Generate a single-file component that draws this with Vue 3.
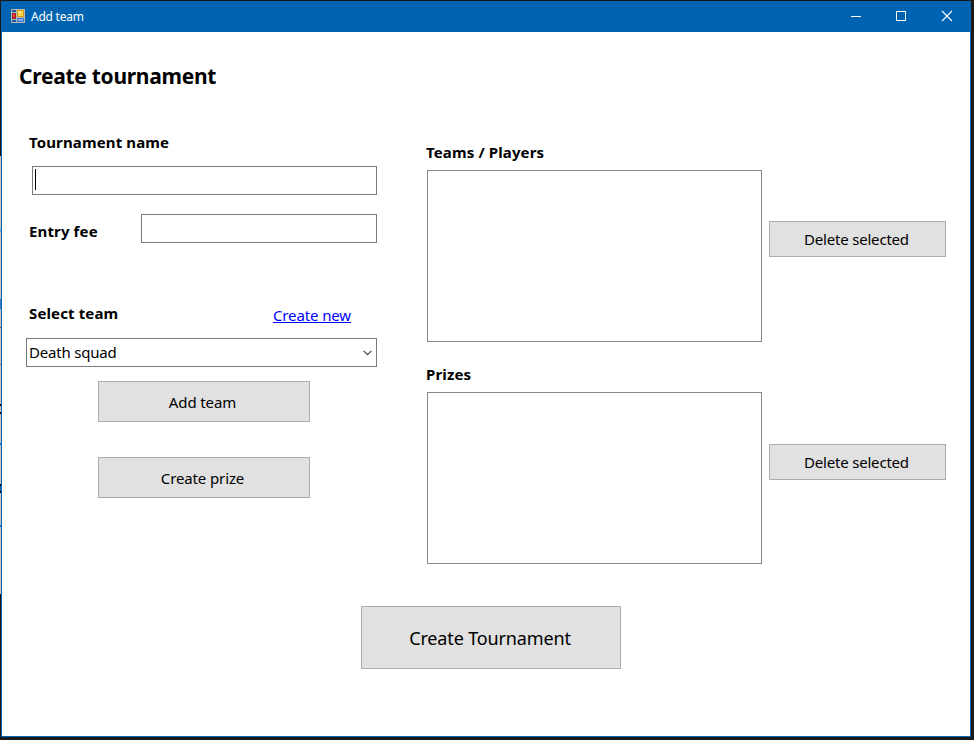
<script setup>
import { ref } from 'vue'

const tournamentName = ref('')
const entryFee = ref('')
const lists = ['Teams / Players', 'Prizes']
</script>

<template>
  <div class="desktop">
    <div class="behind"></div>
    <div class="window">
      <header class="titlebar">
        <svg class="app-icon" width="14" height="14" viewBox="0 0 14 14" shape-rendering="crispEdges">
          <rect width="14" height="14" fill="#b9b9b4" />
          <rect x="1" y="1" width="4" height="2" fill="#1558a8" />
          <rect x="1" y="4" width="4" height="6" fill="#a51a16" />
          <rect x="2" y="5" width="2" height="3" fill="#dd4a40" />
          <rect x="1" y="11" width="4" height="2" fill="#1558a8" />
          <rect x="6" y="1" width="7" height="7" fill="#d09a18" />
          <rect x="7" y="2" width="5" height="5" fill="#fcd24c" />
          <rect x="7" y="2" width="3" height="2" fill="#ffe890" />
          <rect x="6" y="9" width="7" height="4" fill="#3f74d0" />
          <rect x="7" y="10" width="5" height="2" fill="#86aaf0" />
        </svg>
        <span class="title">Add team</span>
        <svg class="controls" width="137" height="30" viewBox="0 0 137 30" fill="none" stroke="#fff">
          <path d="M18 15.5h10M63.5 10.5h9v9h-9z" shape-rendering="crispEdges" />
          <path d="M109 10l10 10M119 10l-10 10" stroke-width="1.1" />
        </svg>
      </header>

      <main class="form">
        <h1>Create tournament</h1>
        <div class="columns">
          <section class="left">
            <label class="label name-label">Tournament name</label>
            <div class="field name-field"><span class="caret"></span>{{ tournamentName }}</div>
            <div class="fee-row">
              <label class="label fee-label">Entry fee</label>
              <div class="field fee-field">{{ entryFee }}</div>
            </div>
            <div class="team-row">
              <label class="label team-label">Select team</label>
              <a class="link">Create new</a>
            </div>
            <div class="select">
              <span>Death squad</span>
              <svg width="9" height="6" viewBox="0 0 9 6" fill="none" stroke="#444" stroke-width="1.1">
                <path d="M.6 .8l3.9 3.9L8.4 .8" />
              </svg>
            </div>
            <button class="btn action add"><span>Add team</span></button>
            <button class="btn action prize"><span>Create prize</span></button>
          </section>

          <section class="right">
            <div v-for="name in lists" :key="name" class="group">
              <label class="label list-label">{{ name }}</label>
              <div class="list-row">
                <div class="list"></div>
                <button class="btn delete"><span>Delete selected</span></button>
              </div>
            </div>
          </section>
        </div>
        <button class="btn submit"><span>Create Tournament</span></button>
      </main>
    </div>
  </div>
</template>

<style>
body {
  background: #1a1a1a;
}
</style>

<style scoped>
* {
  box-sizing: border-box;
}
.desktop {
  display: flex;
  width: 974px;
  height: 740px;
  padding-top: 1px;
  overflow: hidden;
  background: #1a1a1a;
  color: #000;
  font-family: 'Noto Sans', 'Open Sans', sans-serif;
  font-size: 15px;
  letter-spacing: -0.2px;
}
.behind {
  width: 1px;
  height: 438px;
  margin-top: 155px;
  background: linear-gradient(#c3c3c3 73px, #59b4de 73px 76px, #c3c3c3 76px 143px, #2b78c8 143px 153px, #c3c3c3 153px 171px, #555 171px 172px, #c3c3c3 172px 208px, #777 208px 209px, #c3c3c3 209px 248px, #000 248px 250px, #c3c3c3 250px 256px, #000 256px 258px, #c3c3c3 258px 287px, #0078d7 287px 289px, #c3c3c3 289px 328px, #000 328px 330px, #1565b5 330px 335px, #000 335px 337px, #c3c3c3 337px 369px, #0078d7 369px 371px, #c3c3c3 371px);
}
.window {
  display: flex;
  flex-direction: column;
  width: 970px;
  height: 736px;
  border: 1px solid #0063b1;
  background: #fff;
}
.titlebar {
  display: flex;
  align-items: center;
  flex: none;
  height: 30px;
  padding: 0 0 2px 9px;
  background: #0063b1;
  color: #fff;
}
.title {
  margin-left: 6px;
  font-size: 12px;
  letter-spacing: -0.25px;
}
.controls {
  margin-left: auto;
}
.form {
  display: flex;
  flex-direction: column;
  align-items: flex-start;
}
h1 {
  margin: 29px 0 0 17px;
  font-size: 21px;
  font-weight: 700;
  line-height: 30px;
  letter-spacing: -0.28px;
  white-space: nowrap;
}
.columns {
  display: grid;
  grid-template-columns: 424px auto;
}
.left {
  display: flex;
  flex-direction: column;
  align-items: flex-start;
}
.label {
  font-weight: 700;
  line-height: 22px;
  letter-spacing: 0.13px;
  white-space: nowrap;
}
.name-label {
  margin: 40px 0 0 27px;
}
.field,
.select {
  display: flex;
  align-items: center;
  height: 29px;
  border: 1px solid #7a7a7a;
  background: #fff;
}
.name-field {
  width: 345px;
  margin: 13px 0 0 30px;
  padding-left: 2px;
}
.caret {
  width: 1px;
  height: 21px;
  margin-top: -2px;
  background: #000;
}
.fee-row {
  display: flex;
  width: 375px;
  margin-top: 19px;
  padding-left: 27px;
}
.fee-label {
  margin-top: 6px;
}
.fee-field {
  width: 236px;
  margin-left: auto;
}
.team-row {
  display: flex;
  justify-content: space-between;
  width: 349px;
  margin-top: 59px;
  padding-left: 27px;
}
.link {
  margin-top: 2px;
  color: #00f;
  line-height: 22px;
  letter-spacing: -0.12px;
  text-decoration: underline;
}
.select {
  justify-content: space-between;
  width: 351px;
  margin: 12px 0 0 24px;
  padding: 0 4px 0 2px;
}
.select span {
  margin-top: -2px;
}
.btn {
  display: flex;
  align-items: center;
  justify-content: center;
  padding: 0 2px 0 0;
  border: 1px solid #adadad;
  border-radius: 0;
  background: #e1e1e1;
  color: #000;
  font: inherit;
  letter-spacing: inherit;
  white-space: nowrap;
}
.action {
  width: 212px;
  height: 41px;
  margin-left: 96px;
  padding-right: 3px;
  letter-spacing: -0.12px;
}
.add {
  margin-top: 14px;
}
.prize {
  margin-top: 35px;
}
.right {
  display: flex;
  flex-direction: column;
  gap: 21px;
  padding-top: 50px;
}
.group {
  display: flex;
  flex-direction: column;
}
.list-row {
  display: flex;
  gap: 7px;
  margin: 7px 0 0 1px;
}
.list {
  width: 335px;
  height: 172px;
  border: 1px solid #828790;
}
.delete {
  width: 177px;
  height: 36px;
  margin-top: 51px;
}
.group:last-child .delete {
  margin-top: 52px;
}
.submit {
  width: 260px;
  height: 63px;
  margin: 42px 0 0 359px;
  font-size: 18px;
  letter-spacing: -0.14px;
}
</style>
